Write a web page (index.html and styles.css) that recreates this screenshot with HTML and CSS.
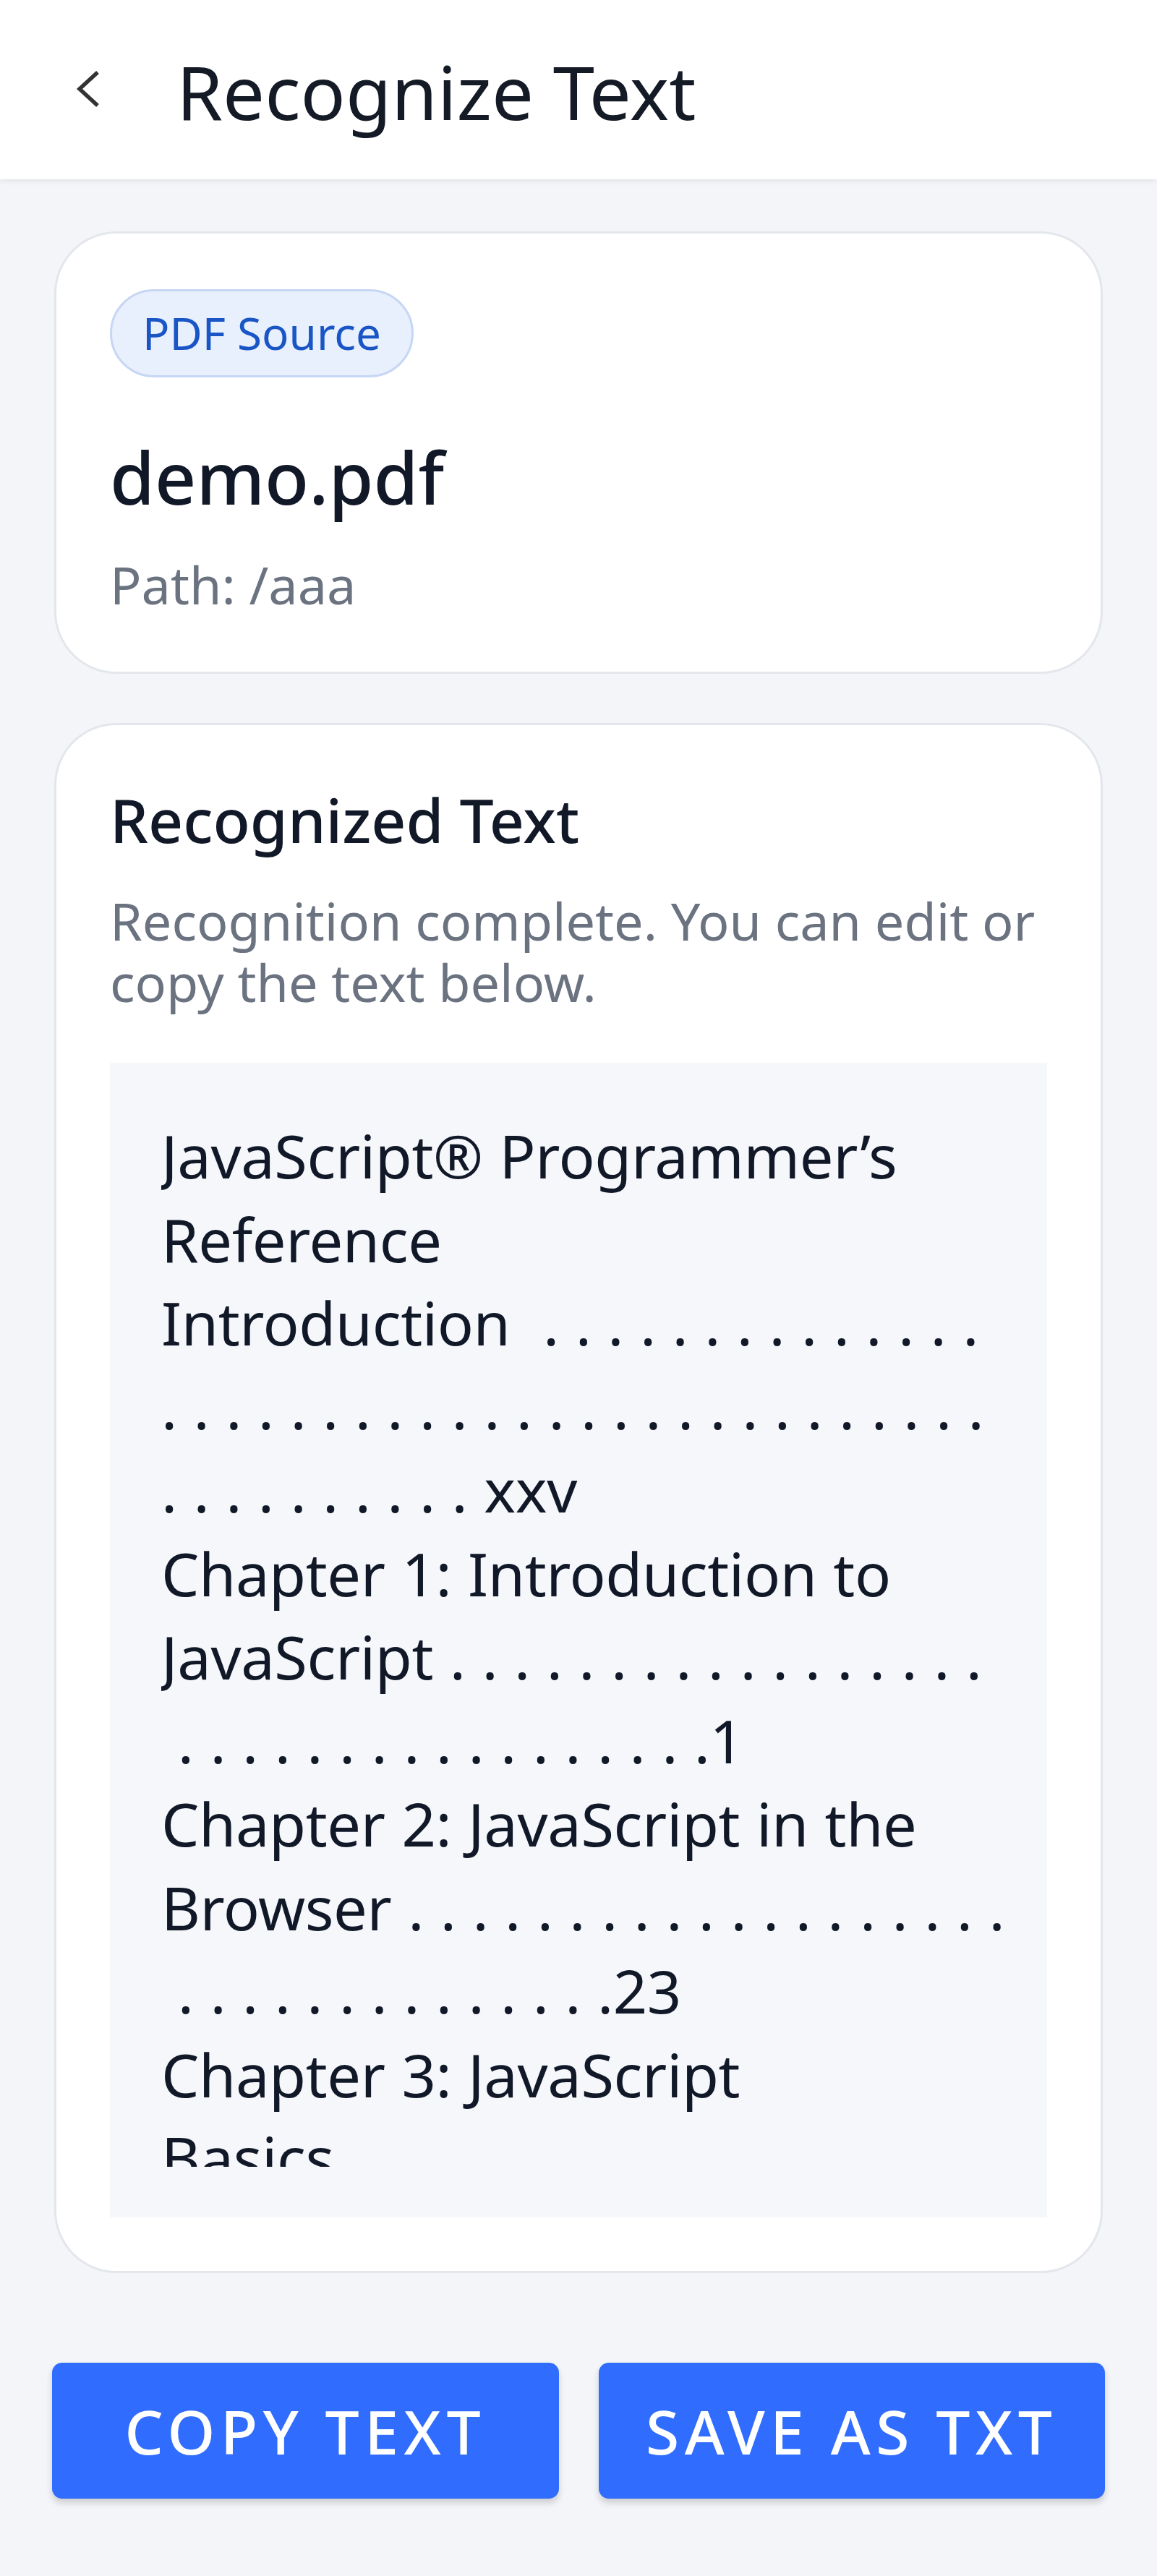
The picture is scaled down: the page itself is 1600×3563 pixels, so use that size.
FILE: index.html
```html
<!DOCTYPE html>
<html lang="en">
<head>
  <meta charset="UTF-8">
  <meta name="viewport" content="width=device-width, initial-scale=1.0">
  <title>Recognize Text</title>
  <link rel="stylesheet" href="styles.css">
</head>
<body>

  <header class="app-bar">
    <svg class="back-btn" viewBox="0 0 52 52" aria-hidden="true">
      <path d="M39 3 L14 26 L39 49" fill="none" stroke="#333" stroke-width="5.5"/>
    </svg>
    <h1>Recognize Text</h1>
  </header>

  <main class="content">
    <section class="card file-card">
      <div class="badge">PDF Source</div>
      <h2 class="file-name">demo.pdf</h2>
      <p class="file-path">Path: /aaa</p>
    </section>

    <section class="card result-card">
      <h2>Recognized Text</h2>
      <p class="hint">Recognition complete. You can edit or copy the text below.</p>
      <div class="result-box">
        <div class="result-text">JavaScript® Programmer’s
Reference
Introduction  . . . . . . . . . . . . . .
. . . . . . . . . . . . . . . . . . . . . . . . . .
. . . . . . . . . . xxv
Chapter 1: Introduction to
JavaScript . . . . . . . . . . . . . . . . .
 . . . . . . . . . . . . . . . . .1
Chapter 2: JavaScript in the
Browser . . . . . . . . . . . . . . . . . . .
 . . . . . . . . . . . . . .23
Chapter 3: JavaScript
Basics</div>
      </div>
    </section>

    <div class="actions">
      <button class="btn" id="copyBtn">Copy Text</button>
      <button class="btn" id="saveBtn">Save as TXT</button>
    </div>
  </main>

</body>
</html>
```

FILE: styles.css
```css
* {
  box-sizing: border-box;
}

body {
  margin: 0;
  background-color: #f3f5f9;
  font-family: 'Noto Sans', 'Open Sans', sans-serif;
  color: #111827;
}

/* Top bar */
.app-bar {
  height: 248px;
  background-color: #fff;
  display: flex;
  align-items: center;
  padding: 4px 0 0 96px;
  box-shadow: 0 2px 8px rgba(0, 0, 0, 0.08);
}

.back-btn {
  display: block;
  width: 52px;
  height: 52px;
  margin: -6px 96px 0 0;
}

.app-bar h1 {
  margin: 0;
  font-size: 103px;
  font-weight: 400;
  color: #151b26;
}

/* Page content */
.content {
  padding: 72px 75px 106px;
}

.card {
  background-color: #fff;
  border: 3px solid #e3e6eb;
  border-radius: 86px;
  padding: 74px;
}

.file-card {
  padding: 77px 74px 69px;
}

.badge {
  width: fit-content;
  height: 122px;
  line-height: 114px;
  padding: 0 42px;
  border: 3px solid #c6d6f4;
  border-radius: 61px;
  background-color: #e8f0fe;
  color: #1a55c6;
  font-size: 62px;
}

.file-name {
  margin: 69px 0 0;
  font-size: 100px;
  font-weight: 500;
  line-height: 136px;
}

.file-path {
  margin: 29px 0 0;
  font-size: 72px;
  line-height: 104px;
  color: #6b7280;
}

/* Recognized text card */
.result-card {
  margin-top: 68px;
}

.result-card h2 {
  margin: 0;
  font-size: 84px;
  font-weight: 500;
  line-height: 114px;
}

.hint {
  margin: 40px 0 0;
  font-size: 72px;
  line-height: 85px;
  color: #6b7280;
}

.result-box {
  margin-top: 69px;
  padding: 70px 41px 70px 71px;
  background-color: #f5f7fb;
}

.result-text {
  height: 1457px;
  overflow: hidden;
  white-space: pre;
  font-size: 83px;
  letter-spacing: -0.4px;
  word-spacing: 1.6px;
  line-height: 115.5px;
  color: #111827;
}

/* Buttons */
.actions {
  display: flex;
  gap: 55px;
  margin: 124px -3px 0;
}

.btn {
  flex: 1;
  height: 188px;
  border: none;
  border-radius: 14px;
  background-color: #306cfe;
  color: #fff;
  font-family: inherit;
  font-size: 84px;
  font-weight: 500;
  letter-spacing: 7.5px;
  text-transform: uppercase;
  box-shadow: 0 6px 10px rgba(0, 0, 0, 0.16);
  cursor: pointer;
}
```
